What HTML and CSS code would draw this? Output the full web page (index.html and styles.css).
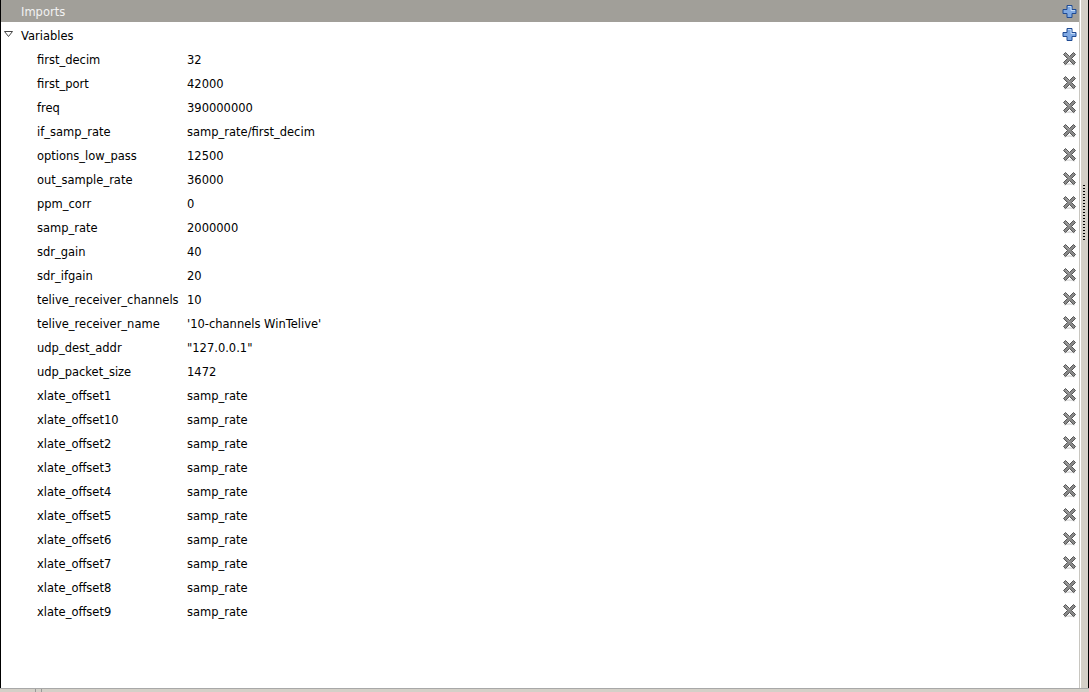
FILE: index.html
```html
<!DOCTYPE html>
<html>
<head>
<meta charset="utf-8">
<link rel="stylesheet" href="styles.css">
</head>
<body>
<div class="window">
  <div class="main">
    <div class="panel">
      <div class="header">
        <span class="header-title">Imports</span>
        <svg class="icon" viewBox="0 0 15 15"><path d="M5 1.5h5v4h4v4h-4v4h-5v-4h-4v-4h4z" fill="#7fa9e3" stroke="#1f4a93" stroke-width="1"/><path d="M6 2.5h3v4h4" fill="none" stroke="#c6dcf7" stroke-width="1"/></svg>
      </div>
      <div class="group">
        <div class="row group-row">
          <span class="caret"><svg viewBox="0 0 9 6" width="9" height="6"><path d="M0.5 0.5h8l-4 5z" fill="#fff" stroke="#444" stroke-width="1"/></svg></span>
          <span class="group-title">Variables</span>
          <svg class="icon" viewBox="0 0 15 15"><path d="M5 1.5h5v4h4v4h-4v4h-5v-4h-4v-4h4z" fill="#7fa9e3" stroke="#1f4a93" stroke-width="1"/><path d="M6 2.5h3v4h4" fill="none" stroke="#c6dcf7" stroke-width="1"/></svg>
        </div>
        <div id="rows"></div>
      </div>
    </div>
    <div class="side"><div class="grip"></div></div>
  </div>
  <div class="bottom"><div class="bottom-thumb"></div></div>
</div>
<script src="app.js"></script>
</body>
</html>
```
FILE: app.js
```js
var data = [
["first_decim","32"],["first_port","42000"],["freq","390000000"],["if_samp_rate","samp_rate/first_decim"],
["options_low_pass","12500"],["out_sample_rate","36000"],["ppm_corr","0"],["samp_rate","2000000"],
["sdr_gain","40"],["sdr_ifgain","20"],["telive_receiver_channels","10"],["telive_receiver_name","'10-channels WinTelive'"],
["udp_dest_addr","\"127.0.0.1\""],["udp_packet_size","1472"],["xlate_offset1","samp_rate"],["xlate_offset10","samp_rate"],
["xlate_offset2","samp_rate"],["xlate_offset3","samp_rate"],["xlate_offset4","samp_rate"],["xlate_offset5","samp_rate"],
["xlate_offset6","samp_rate"],["xlate_offset7","samp_rate"],["xlate_offset8","samp_rate"],["xlate_offset9","samp_rate"]
];
var x = '<svg class="icon" viewBox="0 0 15 15"><path d="M2 13.8l5.5-1 5.5 1" fill="none" stroke="#d8d8d8" stroke-width="1.2"/><path d="M3.5 1.5L7.5 5.5L11.5 1.5L13.5 3.5L9.5 7.5L13.5 11.5L11.5 13.5L7.5 9.5L3.5 13.5L1.5 11.5L5.5 7.5L1.5 3.5Z" fill="#8a8a8a" stroke="#555" stroke-width="1" stroke-linejoin="round"/><path d="M3.5 2.8L7.5 6.8" stroke="#b0b0b0" stroke-width="1"/></svg>';
var html = '';
data.forEach(function(d){
  html += '<div class="row var-row"><span class="name">'+d[0]+'</span><span class="value">'+d[1].replace(/</g,'&lt;')+'</span>'+x+'</div>';
});
document.getElementById('rows').innerHTML = html;
```
FILE: styles.css
```css
html, body { margin: 0; padding: 0; }
body { width: 1089px; height: 692px; overflow: hidden; background: #fff; font-family: "DejaVu Sans", sans-serif; font-size: 11.5px; color: #000; }
.window { width: 1089px; height: 692px; display: flex; flex-direction: column; }
.main { flex: 1; display: flex; min-height: 0; }
.panel { flex: 1; border-left: 1px solid #000; border-right: 1px solid #c8c6c0; display: flex; flex-direction: column; }
.header { height: 22px; background: #a19f99; display: flex; align-items: center; padding-left: 20px; padding-right: 2px; }
.header-title { flex: 1; color: #f2f2f2; padding-top: 1px; }
.icon { width: 15px; height: 15px; flex: none; }
.row { height: 24px; display: flex; align-items: center; padding-right: 2px; }
.row > span { padding-top: 4px; }
.group-row { padding-left: 3px; }
.row > .caret { width: 17px; display: flex; align-items: center; padding-top: 0; }
.group-title { flex: 1; }
.var-row { padding-left: 36px; }
.name { width: 150px; }
.value { flex: 1; }
.side { width: 7px; background: #d4d0c8; border-left: 1px solid #fff; border-right: 1px solid #000; position: relative; }
.grip { position: absolute; left: 2px; top: 185px; width: 2px; height: 55px; background: repeating-linear-gradient(to bottom, #000 0 1px, transparent 1px 3px); }
.bottom { height: 3px; background: #d4d0c8; border-top: 1px solid #a8a8a8; position: relative; }
.bottom-thumb { position: absolute; left: 35px; top: 0; width: 5px; height: 3px; border-left: 1px solid #999; border-right: 1px solid #999; }
```
